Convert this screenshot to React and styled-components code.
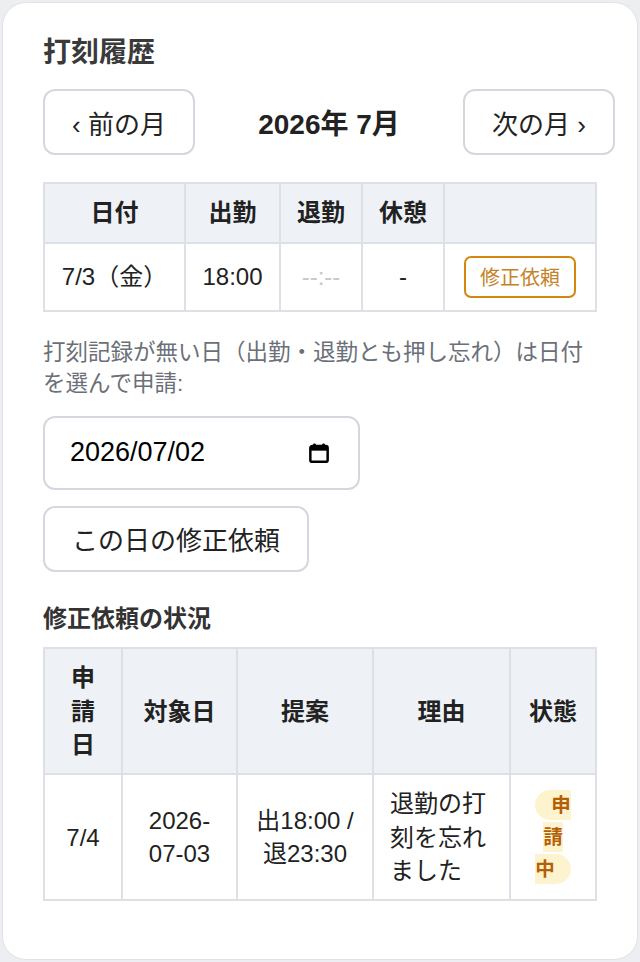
import React from "react";
import styled, { createGlobalStyle } from "styled-components";

const GlobalStyle = createGlobalStyle`
  html, body { margin: 0; padding: 0; }
  body {
    background: #eceef1;
    font-family: "Liberation Sans", "Noto Sans CJK JP", sans-serif;
    color: #222;
  }
  * { box-sizing: border-box; }
`;

const Page = styled.div`
  padding: 2px;
`;

const Card = styled.div`
  min-height: 958px;
  background: #fff;
  border: 1px solid #dfe2e6;
  border-radius: 24px;
  padding: 30px 22px 40px 40px;
`;

const Title = styled.h3`
  margin: 0 0 17px;
  font-size: 28px;
  line-height: 1.4;
  font-weight: 700;
  color: #3a3a3a;
`;

const SubTitle = styled.h4`
  margin: 30px 0 12px;
  font-size: 24px;
  line-height: 1.4;
  font-weight: 700;
  color: #333;
`;

const MonthNav = styled.div`
  display: flex;
  align-items: center;
  justify-content: space-between;
  margin-bottom: 27px;
`;

const MonthLabel = styled.div`
  font-size: 28px;
  font-weight: 700;
  color: #222;
`;

const Button = styled.button`
  height: 66px;
  padding: 0 27px;
  font-family: inherit;
  font-size: 26px;
  color: #222;
  background: #fff;
  border: 2px solid #d4d8de;
  border-radius: 12px;
`;

const FixButton = styled.button`
  height: 42px;
  padding: 0 14px;
  font-family: inherit;
  font-size: 20px;
  color: #c4832a;
  background: #fff;
  border: 2px solid #d4870f;
  border-radius: 7px;
`;

const Table = styled.table`
  width: 552px;
  table-layout: fixed;
  border-collapse: collapse;
`;

const Th = styled.th`
  width: ${(p) => p.$w}px;
  padding: 12px 16px;
  font-size: 24px;
  line-height: 1.39;
  font-weight: 700;
  color: #222;
  background: #eef2f6;
  border: 2px solid #dde1e6;
  text-align: center;
  white-space: ${(p) => (p.$nowrap ? "nowrap" : "normal")};
`;

const Td = styled.td`
  padding: 12px 16px;
  font-size: ${(p) => p.$fs ?? 24}px;
  line-height: ${(p) => p.$lh ?? "1.39"};
  color: ${(p) => (p.$muted ? "#c6c9cd" : "#222")};
  border: 2px solid #dde1e6;
  text-align: ${(p) => p.$align ?? "center"};
  vertical-align: middle;
`;

const Badge = styled.span`
  padding: 4px 16px;
  font-size: 19.5px;
  font-weight: 700;
  color: #b45f06;
  background: #fef3cf;
  border-radius: 999px;
`;

const Hint = styled.p`
  margin: 25px 0 16px;
  max-width: 553px;
  font-size: 22.5px;
  line-height: 1.4;
  color: #6b7078;
`;

const DateField = styled.label`
  display: flex;
  align-items: center;
  justify-content: space-between;
  width: 317px;
  height: 74px;
  padding: 0 28px 0 25px;
  border: 2px solid #d4d8de;
  border-radius: 12px;
  margin-bottom: 16px;
`;

const DateText = styled.input`
  width: 160px;
  border: none;
  outline: none;
  padding: 0;
  font-family: "Liberation Sans", sans-serif;
  font-size: 27px;
  color: #000;
  background: transparent;
`;

function CalendarIcon() {
  return (
    <svg width="22" height="22" viewBox="0 0 16 16">
      <rect x="1.7" y="2.9" width="12.6" height="11.5" rx="1.4" fill="none" stroke="#000" strokeWidth="1.8" />
      <rect x="1.7" y="2.9" width="12.6" height="3.4" fill="#000" />
      <rect x="3.8" y="1" width="1.8" height="3" rx="0.6" fill="#000" />
      <rect x="10.4" y="1" width="1.8" height="3" rx="0.6" fill="#000" />
    </svg>
  );
}

export default function App() {
  return (
    <>
      <GlobalStyle />
      <Page>
        <Card>
          <Title>打刻履歴</Title>
          <MonthNav>
            <Button>‹ 前の月</Button>
            <MonthLabel>2026年 7月</MonthLabel>
            <Button>次の月 ›</Button>
          </MonthNav>

          <Table>
            <thead>
              <tr>
                <Th $w={141} $nowrap>日付</Th>
                <Th $w={95} $nowrap>出勤</Th>
                <Th $w={82} $nowrap>退勤</Th>
                <Th $w={82} $nowrap>休憩</Th>
                <Th $w={152}></Th>
              </tr>
            </thead>
            <tbody>
              <tr>
                <Td>7/3（金）</Td>
                <Td>18:00</Td>
                <Td $muted>--:--</Td>
                <Td>-</Td>
                <Td>
                  <FixButton>修正依頼</FixButton>
                </Td>
              </tr>
            </tbody>
          </Table>

          <Hint>打刻記録が無い日（出勤・退勤とも押し忘れ）は日付を選んで申請:</Hint>
          <DateField>
            <DateText readOnly value="2026/07/02" />
            <CalendarIcon />
          </DateField>
          <Button>この日の修正依頼</Button>

          <SubTitle>修正依頼の状況</SubTitle>
          <Table>
            <thead>
              <tr>
                <Th $w={78}>申請日</Th>
                <Th $w={115}>対象日</Th>
                <Th $w={136}>提案</Th>
                <Th $w={137}>理由</Th>
                <Th $w={86}>状態</Th>
              </tr>
            </thead>
            <tbody>
              <tr>
                <Td>7/4</Td>
                <Td>2026-07-03</Td>
                <Td>出18:00 / 退23:30</Td>
                <Td $align="left">退勤の打刻を忘れました</Td>
                <Td $fs={20.5} $lh="31px">
                  <Badge>申請中</Badge>
                </Td>
              </tr>
            </tbody>
          </Table>
        </Card>
      </Page>
    </>
  );
}
